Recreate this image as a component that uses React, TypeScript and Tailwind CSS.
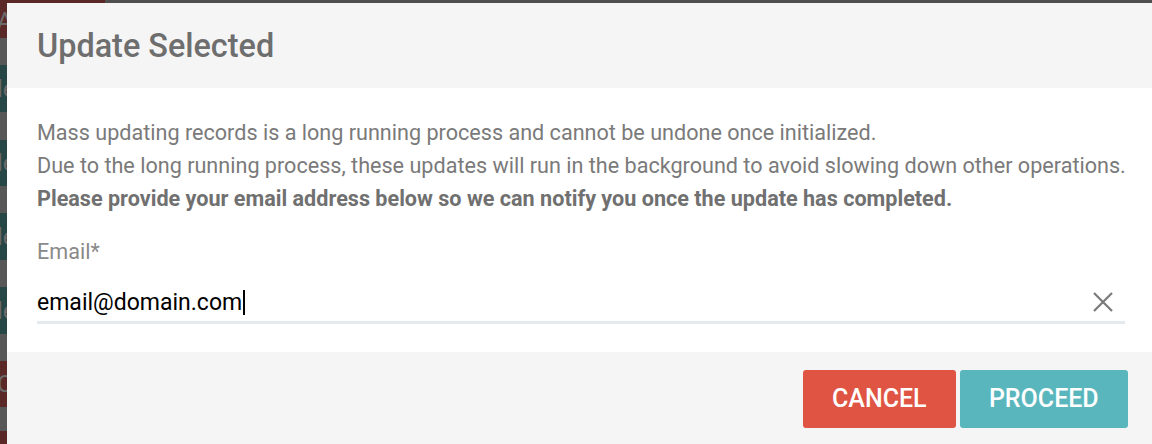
import React from "react";

const strip: { c: string; h: number; t?: string }[] = [
  { c: "bg-[#5b2828]", h: 35, t: "A" },
  { c: "bg-[#575757]", h: 27 },
  { c: "bg-[#274646]", h: 47, t: "le" },
  { c: "bg-[#575757]", h: 28 },
  { c: "bg-[#274646]", h: 46, t: "le" },
  { c: "bg-[#575757]", h: 27 },
  { c: "bg-[#274646]", h: 47, t: "le" },
  { c: "bg-[#575757]", h: 27 },
  { c: "bg-[#274646]", h: 47, t: "le" },
  { c: "bg-[#575757]", h: 27 },
  { c: "bg-[#5b2828]", h: 46, t: "C" },
  { c: "bg-[#575757]", h: 24 },
  { c: "bg-[#5b2828]", h: 30 },
];

export default function App() {
  return (
    <div
      className="w-[1152px] h-[444px] overflow-hidden flex flex-col bg-[#575757]"
      style={{ fontFamily: "Roboto, 'Liberation Sans', sans-serif" }}
    >
      <div className="h-[3px] flex shrink-0">
        <div className="w-[105px] bg-[#5b2828]" />
        <div className="flex-1 bg-[#4f4f4f]" />
      </div>
      <div className="flex flex-1 min-h-0">
        <div className="w-[7px] shrink-0 flex flex-col overflow-hidden">
          {strip.map((s, i) => (
            <div
              key={i}
              className={`${s.c} shrink-0 flex items-center overflow-hidden text-[24px] leading-none text-[#6a6a6a] -ml-[3px]`}
              style={{ height: s.h }}
            >
              {s.t ?? ""}
            </div>
          ))}
        </div>
        <div className="flex-1 flex flex-col bg-white">
          <div className="h-[85px] shrink-0 bg-[#f5f5f5] px-[30px] flex items-center">
            <h2 className="text-[32.4px] font-medium text-[#6e6e6e] leading-none mt-[1px]">
              Update Selected
            </h2>
          </div>
          <div className="flex-1 px-[30px] pt-[28px]">
            <div className="text-[21.6px] leading-[33px] text-[#7a7a7a] whitespace-nowrap">
              <p>Mass updating records is a long running process and cannot be undone once initialized.</p>
              <p>Due to the long running process, these updates will run in the background to avoid slowing down other operations.</p>
              <p className="font-bold text-[#707070]">
                Please provide your email address below so we can notify you once the update has completed.
              </p>
            </div>
            <div className="mt-[22px] text-[21.6px] leading-[30px] text-[#8a8a8a]">Email*</div>
            <div className="mt-[16px] w-[1088px] flex items-center border-b-[3px] border-[#e3e9ec] h-[41px]">
              <div className="flex-1 text-[23px] text-black leading-none flex items-center">
                email@domain.com
                <span className="inline-block w-[2px] h-[25px] bg-black ml-[1px]" />
              </div>
              <svg width="22" height="22" viewBox="0 0 22 22" className="mr-[11px]">
                <path d="M2 2 L20 20 M20 2 L2 20" stroke="#7a7a7a" strokeWidth="2.2" />
              </svg>
            </div>
          </div>
          <div className="h-[92px] shrink-0 bg-[#f5f5f5] flex justify-end items-start pt-[18px] pr-[28px] gap-[4px]">
            <button className="w-[153px] h-[58px] rounded-[3px] bg-[#e05444] text-white text-[25px] font-medium">
              CANCEL
            </button>
            <button className="w-[168px] h-[58px] rounded-[3px] bg-[#5ab6bd] text-white text-[25px] font-medium">
              PROCEED
            </button>
          </div>
        </div>
      </div>
    </div>
  );
}
